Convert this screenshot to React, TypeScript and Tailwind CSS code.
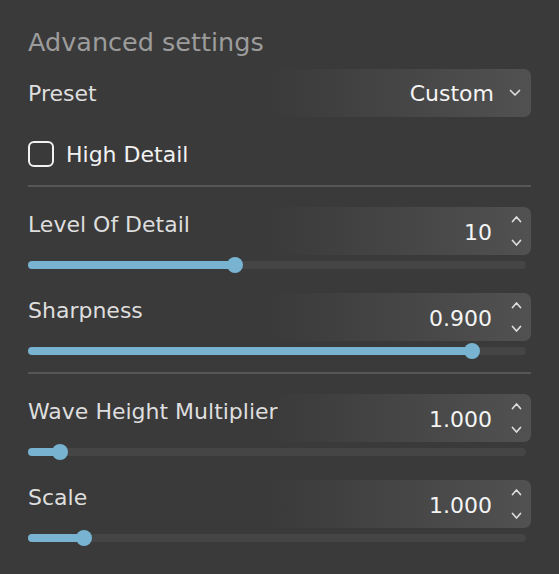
import React from "react";

const font = "font-['DejaVu_Sans',sans-serif]";

function Chevron({ up = false, className = "", w = 12 }: { up?: boolean; className?: string; w?: number }) {
  return (
    <svg width={w} height="8" viewBox={`0 0 ${w} 8`} className={className}>
      <path
        d={up ? `M1.5 6.5 L${w / 2} 2 L${w - 1.5} 6.5` : `M1.5 1.5 L${w / 2} 6 L${w - 1.5} 1.5`}
        fill="none"
        stroke="#dcdcdc"
        strokeWidth="1.7"
        strokeLinecap="round"
        strokeLinejoin="round"
      />
    </svg>
  );
}

const boxBg = "bg-[linear-gradient(to_right,rgba(81,81,81,0)_48%,#515151)]";

function SliderRow({ label, value, pct, first = false }: { label: string; value: string; pct: number; first?: boolean }) {
  return (
    <div className={first ? "mt-[20px]" : "mt-[24px]"}>
      <div className={`flex h-[48px] items-center rounded-[7px] pr-[9px] ${boxBg}`}>
        <span className="whitespace-nowrap text-[22px] text-[#dedede] -mt-[13px]">{label}</span>
        <span className="ml-auto text-[22px] text-[#f4f4f4] mt-[3px]">{value}</span>
        <div className="ml-[19px] flex flex-col items-center gap-[16px]">
          <Chevron up w={11} />
          <Chevron w={11} />
        </div>
      </div>
      <div className="relative mt-[6px] mr-[5px] h-[8px] rounded-full bg-[#454545]">
        <div className="h-[8px] rounded-full bg-[#78b4d2]" style={{ width: `${pct}%` }} />
        <div
          className="absolute top-1/2 h-[16px] w-[16px] -translate-x-1/2 -translate-y-1/2 rounded-full bg-[#78b4d2]"
          style={{ left: `${pct}%` }}
        />
      </div>
    </div>
  );
}

export default function App() {
  return (
    <div className={`h-[574px] w-[559px] bg-[#3a3a3a] px-[28px] pt-[26px] ${font}`}>
      <div className="h-[32px] text-[25.5px] leading-[32px] text-[#9c9c9c]">Advanced settings</div>
      <div className={`mt-[11px] flex h-[48px] items-center rounded-[7px] pr-[10px] ${boxBg}`}>
        <span className="text-[22px] text-[#dedede]">Preset</span>
        <span className="ml-auto text-[22px] text-[#f4f4f4]">Custom</span>
        <Chevron className="ml-[15px]" />
      </div>
      <div className="mt-[24px] flex h-[26px] items-center">
        <div className="h-[26px] w-[26px] rounded-[6px] border-2 border-[#f2f2f2]" />
        <span className="ml-[12px] text-[22px] text-[#f2f2f2]">High Detail</span>
      </div>
      <div className="mt-[18px] h-[2px] bg-[#565656]" />
      <SliderRow label="Level Of Detail" value="10" pct={41.6} first />
      <SliderRow label="Sharpness" value="0.900" pct={89.2} />
      <div className="mt-[17px] h-[2px] bg-[#565656]" />
      <SliderRow label="Wave Height Multiplier" value="1.000" pct={6.4} first />
      <SliderRow label="Scale" value="1.000" pct={11.2} />
    </div>
  );
}
